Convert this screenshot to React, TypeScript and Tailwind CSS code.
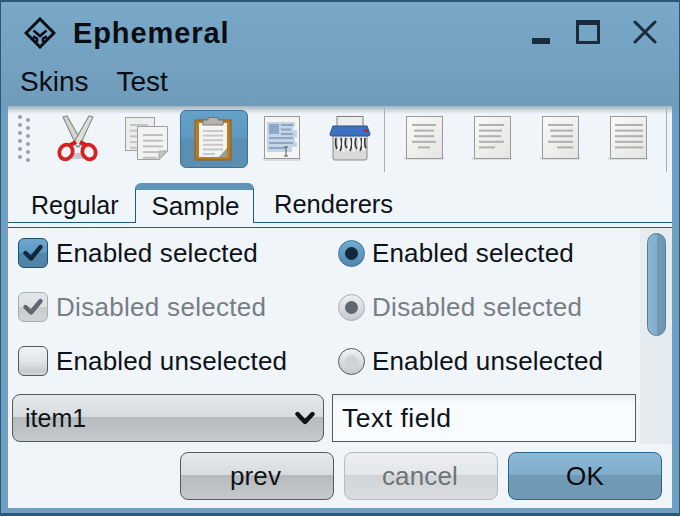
import React from 'react';

const FONT = 'font-["Liberation_Sans",sans-serif]';

function Logo() {
  return (
    <svg width="32" height="32" viewBox="0 0 32 32" fill="none" stroke="#0b0f14" strokeWidth="3">
      <path d="M16 2 L30 16 L16 30 L2 16 Z" />
      <path d="M9.5 13.5 L16 19 L22.5 13.5 M9 19.5 L13 21.5 L13 25 M23 19.5 L19 21.5 L19 25" strokeWidth="2.6" />
    </svg>
  );
}

function Scissors() {
  return (
    <svg width="44" height="48" viewBox="0 0 44 48">
      <ellipse cx="22" cy="41" rx="14" ry="3" fill="#c4c8cc" />
      <path d="M7 2 L11 1 L27 29 L21 32 Z" fill="#d4d4d0" stroke="#8c8c88" strokeWidth="1.2" />
      <path d="M37 2 L33 1 L17 29 L23 32 Z" fill="#dededa" stroke="#8c8c88" strokeWidth="1.2" />
      <path d="M20 27 L14 30 M24 27 L30 30" stroke="#cc1c1c" strokeWidth="4" />
      <ellipse cx="10" cy="37" rx="6.5" ry="7.5" transform="rotate(25 10 37)" fill="#f0f4f8" stroke="#d62222" strokeWidth="3.8" />
      <ellipse cx="33" cy="37" rx="6.5" ry="7.5" transform="rotate(-25 33 37)" fill="#f0f4f8" stroke="#d62222" strokeWidth="3.8" />
    </svg>
  );
}

function Lines({ x, y, widths, gap = 5.7, align = 'left', w = 26, color = '#b0b0b0' }: { x: number; y: number; widths: number[]; gap?: number; align?: string; w?: number; color?: string }) {
  return (
    <>
      {widths.map((lw, i) => {
        const left = align === 'left' ? x : align === 'right' ? x + w - lw : x + (w - lw) / 2;
        return <rect key={i} x={left} y={y + i * gap} width={lw} height="2" fill={color} />;
      })}
    </>
  );
}

function Copy() {
  return (
    <svg width="44" height="46" viewBox="0 0 44 46">
      <rect x="1.5" y="1.5" width="29" height="33" fill="#eceeee" stroke="#a0a0a0" />
      <Lines x={6} y={8} widths={[18, 18, 18, 18, 14]} color="#c4c4c4" />
      <path d="M13.5 10.5 H43.5 V35 L35 43.5 H13.5 Z" fill="#f2f3f3" stroke="#a0a0a0" />
      <path d="M35 43.5 L35 35 L43.5 35 Z" fill="#c6c6c6" stroke="#a0a0a0" />
      <Lines x={19} y={18} widths={[20, 20, 20, 20, 14]} color="#c0c0c0" />
    </svg>
  );
}

function Clipboard() {
  return (
    <svg width="40" height="46" viewBox="0 0 40 46">
      <rect x="1" y="4" width="36" height="40" fill="#b87d1f" stroke="#8c5f14" />
      <path d="M5 7 H33 V41 H5 Z" fill="#f2f3f2" />
      <path d="M25 41 L33 32 V41 Z" fill="#9a9a98" />
      <Lines x={9} y={14} widths={[20, 20, 20, 20, 20, 12]} gap={4.6} color="#c8c8c8" />
      <path d="M9 9 V4 H14 V1.5 H24 V4 H29 V9 Z" fill="#b4b4ac" stroke="#77776f" />
    </svg>
  );
}

function NoteDoc() {
  return (
    <svg width="40" height="46" viewBox="0 0 40 46">
      <rect x="1" y="42" width="38" height="3" fill="#d8dce0" />
      <rect x="2.5" y="0.5" width="35" height="42" fill="#f4f4f2" stroke="#9a9a9a" />
      <path d="M5 6 H33 V11 H31 V14 H35 V21 H33 V26 H35 V31 H30 V36 H5 Z" fill="#c4d4e8" />
      <rect x="7" y="8" width="10" height="10" fill="#8ea8c4" />
      <Lines x={19} y={8} widths={[12, 10, 12]} gap={4.5} color="#8ea8c4" />
      <Lines x={7} y={21} widths={[24, 24, 16]} gap={5} color="#8ea8c4" />
      <path d="M22 31 H26 M24 31 V40 M22 40 H26" stroke="#555" strokeWidth="1" fill="none" />
    </svg>
  );
}

function Shredder() {
  return (
    <svg width="44" height="48" viewBox="0 0 44 48">
      <path d="M5 18 H39 V43 Q39 45 37 45 H7 Q5 45 5 43 Z" fill="#d8dada" stroke="#8a8a8a" />
      <rect x="9" y="1.5" width="26" height="11" fill="#ececea" stroke="#808080" />
      <path d="M5 11 H39 L42 19 Q42 21 40 21 H4 Q2 21 2 19 Z" fill="#3f70c0" stroke="#29518f" />
      <rect x="36" y="14" width="4" height="3" fill="#d02020" />
      <path d="M8 23 Q7 30 9 34 M13 23 Q15 30 12 36 M18 23 Q16 30 19 33 M23 23 Q25 30 22 36 M28 23 Q26 30 29 34 M33 23 Q35 30 32 36 M37 23 Q36 30 38 33" stroke="#333" strokeWidth="1.6" fill="none" />
      <path d="M10.5 23 Q12 30 10 36 M15.5 23 Q14 30 16 37 M20.5 23 Q22 30 20 36 M25.5 23 Q24 30 26 37 M30.5 23 Q32 30 30 36 M35 23 Q34 30 36 36" stroke="#f6f6f6" strokeWidth="1.8" fill="none" />
    </svg>
  );
}

function AlignDoc({ align, widths }: { align: string; widths: number[] }) {
  return (
    <svg width="40" height="46" viewBox="0 0 40 46">
      <rect x="0" y="41" width="40" height="3" fill="#dde1e5" />
      <defs>
        <linearGradient id="docfill" x1="0" y1="0" x2="1" y2="1">
          <stop offset="0" stopColor="#fafafa" />
          <stop offset="1" stopColor="#e4e4e2" />
        </linearGradient>
      </defs>
      <rect x="2.5" y="0.5" width="36" height="42" fill="url(#docfill)" stroke="#9a9a9a" />
      <Lines x={7} y={8} widths={widths} align={align} gap={5.6} />
    </svg>
  );
}

function ToolButton({ selected, children }: { selected?: boolean; children: React.ReactNode }) {
  return (
    <div
      className={
        'w-[68px] h-[58px] flex items-center justify-center rounded-[6px] border ' +
        (selected
          ? 'border-[#3d7095] bg-[linear-gradient(#64a2ca_0%,#5c98c0_50%,#5a8eb3_50%,#5a8eb3_100%)]'
          : 'border-transparent')
      }
    >
      {children}
    </div>
  );
}

function Check({ color }: { color: string }) {
  return (
    <svg width="22" height="20" viewBox="0 0 22 20" fill="none" stroke={color} strokeWidth="4.4" strokeLinecap="round" strokeLinejoin="round">
      <path d="M3.5 10 L9 15.5 L18.5 4" />
    </svg>
  );
}

function CheckBox({ kind }: { kind: 'on' | 'disabled' | 'off' }) {
  const cls =
    kind === 'on'
      ? 'border-[#1f4f73] bg-[linear-gradient(#6ca8d0_0%,#5c98c0_50%,#5287ac_50%,#4f83a8_100%)]'
      : kind === 'disabled'
        ? 'border-[#a8adb2] bg-[linear-gradient(#e4e7ea_0%,#dde0e3_50%,#c8ccd0_50%,#d0d4d7_100%)]'
        : 'border-[#55595d] bg-[linear-gradient(#f0f2f4_0%,#e2e5e8_50%,#c8ccd0_85%,#d0d4d7_100%)]';
  return (
    <div className={'w-[30px] h-[30px] shrink-0 rounded-[6px] border flex items-center justify-center ' + cls}>
      {kind === 'on' && <Check color="#12283c" />}
      {kind === 'disabled' && <Check color="#5e6670" />}
    </div>
  );
}

function Radio({ kind }: { kind: 'on' | 'disabled' | 'off' }) {
  const cls =
    kind === 'on'
      ? 'border-[#3d7095] bg-[linear-gradient(#72acd2,#4f86ac)]'
      : kind === 'disabled'
        ? 'border-[#a8adb2] bg-[linear-gradient(#eef0f2,#c4c9ce)]'
        : 'border-[#55595d] bg-[linear-gradient(#f0f2f4,#c4c8cc)]';
  return (
    <div className={'w-[27px] h-[27px] shrink-0 rounded-full border flex items-center justify-center ' + cls}>
      {kind === 'on' && <div className="w-[13px] h-[13px] rounded-full bg-[#12283c]" />}
      {kind === 'disabled' && <div className="w-[13px] h-[13px] rounded-full bg-[#5e6670]" />}
      {kind === 'off' && <div className="w-[13px] h-[13px] rounded-full bg-[#d0d3d6]" />}
    </div>
  );
}

function OptionRow({ kind, text }: { kind: 'on' | 'disabled' | 'off'; text: string }) {
  const color = kind === 'disabled' ? 'text-[#787e84] tracking-[0.3px]' : 'text-[#0d1318]';
  return (
    <div className="h-[54px] flex items-center">
      <div className="w-[330px] flex items-center gap-[8px] pl-[10px]">
        <CheckBox kind={kind} />
        <span className={color}>{text}</span>
      </div>
      <div className="flex items-center gap-[7px]">
        <Radio kind={kind} />
        <span className={color}>{text}</span>
      </div>
    </div>
  );
}

function DialogButton({ kind, children }: { kind: 'normal' | 'disabled' | 'ok'; children: string }) {
  const cls =
    kind === 'ok'
      ? 'border-[#2f6288] text-[#06090c] bg-[linear-gradient(#8ab8d6_0%,#7fadcb_48%,#6f99b6_48%,#7199b6_100%)]'
      : kind === 'disabled'
        ? 'border-[#b8bcc0] text-[#6e7478] pr-[2px] bg-[linear-gradient(#eceef0_0%,#e4e7e9_48%,#d2d5d8_48%,#dadddf_100%)]'
        : 'border-[#55595d] text-[#0d1318] pr-[3px] bg-[linear-gradient(#e6e9ec_0%,#d8dcdf_48%,#b6babd_48%,#c6cacd_100%)]';
  return <div className={'w-[154px] h-[48px] rounded-[8px] border flex items-center justify-center pb-[1px] ' + cls}>{children}</div>;
}

function GripColumn({ offset }: { offset?: boolean }) {
  return (
    <div className={'flex flex-col gap-[4px] ' + (offset ? 'mt-[3px]' : '')}>
      {Array.from({ length: 6 }).map((_, i) => (
        <div key={i} className="w-[4px] h-[4px] rounded-full bg-[#9a9ea4]" />
      ))}
    </div>
  );
}

export default function App() {
  return (
    <div className={'w-[680px] h-[516px] flex flex-col overflow-hidden bg-[#6f9fc0] border-t-2 border-x border-b-[3px] border-[#2c5878] text-[26px] tracking-[0.15px] leading-none ' + FONT}>
      {/* Title */}
      <div className="h-[104px] shrink-0 flex flex-col bg-[linear-gradient(#79a8c8,#6f9cbb)] text-[#0a0e12]">
        <div className="h-[58px] flex items-center pl-[23px] pr-[22px] pt-[4px]">
          <Logo />
          <span className="ml-[17px] text-[29px] tracking-[0.9px] font-bold">Ephemeral</span>
          <div className="ml-auto flex items-start h-[24px] -mt-[2px]">
            <div className="w-[18px] h-[6px] bg-[#1a2c3c] mt-[18px]" />
            <div className="ml-[26px] w-[24px] h-[24px] border-[3px] border-t-[5px] border-[#1a2c3c]" />
            <svg className="ml-[33px]" width="24" height="24" viewBox="0 0 24 24" stroke="#1a2c3c" strokeWidth="3" strokeLinecap="round">
              <path d="M2 2 L22 22 M22 2 L2 22" />
            </svg>
          </div>
        </div>
        <div className="flex items-center pl-[19px] gap-[28px] mt-[8px] text-[28px] tracking-normal">
          <span>Skins</span>
          <span>Test</span>
        </div>
      </div>

      {/* Content */}
      <div className="mx-[7px] flex-1 min-h-0 flex flex-col bg-[#f0f5fa]">
        <div className="h-[8px] -mb-[8px] bg-[linear-gradient(#a4b4c0,#f0f5fa)]" />
        <div className="h-[66px] shrink-0 flex items-start pt-[4px] pl-[10px]">
          <div className="w-[14px] mt-[5px] mr-[2px] flex gap-[4px]">
            <GripColumn />
            <GripColumn offset />
          </div>
          <div className="ml-[10px] flex">
            <ToolButton><Scissors /></ToolButton>
            <ToolButton><Copy /></ToolButton>
            <ToolButton selected><Clipboard /></ToolButton>
            <ToolButton><NoteDoc /></ToolButton>
            <ToolButton><Shredder /></ToolButton>
          </div>
          <div className="w-px h-[64px] bg-[#a8aeb4] -mt-[2px] mr-[5px]" />
          <div className="flex">
            <ToolButton><AlignDoc align="center" widths={[24, 20, 20, 24, 12]} /></ToolButton>
            <ToolButton><AlignDoc align="left" widths={[25, 23, 22, 25, 16]} /></ToolButton>
            <ToolButton><AlignDoc align="right" widths={[25, 23, 22, 25, 16]} /></ToolButton>
            <ToolButton><AlignDoc align="left" widths={[28, 28, 28, 28, 28]} /></ToolButton>
          </div>
          <div className="w-px h-[64px] bg-[#a8aeb4] -mt-[2px] ml-[4px]" />
        </div>

        {/* Tabs */}
        <div className="h-[45px] shrink-0 flex items-end text-[#0d1318] mt-[6px] text-[25.5px] tracking-normal">
          <div className="w-[127px] h-[40px] flex items-center pl-[23px] pt-[5px] border-b border-[#1f5a80] text-[25px]">Regular</div>
          <div className="w-[119px] h-[40px] flex items-center justify-center pb-[2px] pl-[2px] rounded-t-[6px] border-x border-[#1f5a80] bg-[#f0f5fa] border-t-[7px] border-t-[#5f93b8] text-[26px]">Sample</div>
          <div className="flex-1 h-[40px] flex items-center pl-[20px] pt-[5px] border-b border-[#1f5a80]">Renderers</div>
        </div>
        <div className="h-[5px] shrink-0 border-b border-[#1f5a80]" />

        <div className="flex-1 min-h-0 flex flex-col">
          <div className="h-[216px] shrink-0 flex">
            <div className="flex-1 -mt-[2px] flex flex-col">
              <OptionRow kind="on" text="Enabled selected" />
              <OptionRow kind="disabled" text="Disabled selected" />
              <OptionRow kind="off" text="Enabled unselected" />
              <div className="flex gap-[8px] pl-[4px] mt-[6px]">
                <div className="w-[312px] h-[48px] rounded-[8px] border border-[#55595d] flex items-center justify-between pl-[12px] pr-[8px] text-[#0d1318] text-[25px] tracking-normal bg-[linear-gradient(#e6e9ec_0%,#d8dcdf_48%,#b6babd_48%,#c6cacd_100%)]">
                  <span>item1</span>
                  <svg width="20" height="14" viewBox="0 0 20 14" fill="none" stroke="#0d1318" strokeWidth="4.4" strokeLinecap="round" strokeLinejoin="round">
                    <path d="M2.5 3 L10 11 L17.5 3" />
                  </svg>
                </div>
                <div className="w-[304px] h-[48px] border border-[#55595d] flex items-center pl-[9px] text-[#0d1318] text-[26.5px] tracking-[0.5px] bg-[linear-gradient(#e8ecf0,#f8fbff_20%)]">
                  Text field
                </div>
              </div>
            </div>
            <div className="w-[32px] shrink-0 bg-[#e6ebf0] pt-[5px] pl-[7px]">
              <div className="w-[19px] h-[103px] rounded-full border border-[#5a7a92] bg-[linear-gradient(90deg,#8ab8d6,#7fadcb_50%,#6f99b6_50%,#7199b6)]" />
            </div>
          </div>
          <div className="flex justify-end gap-[10px] pr-[10px] pt-[8px]">
            <DialogButton kind="normal">prev</DialogButton>
            <DialogButton kind="disabled">cancel</DialogButton>
            <DialogButton kind="ok">OK</DialogButton>
          </div>
        </div>
      </div>
      <div className="h-[5px] shrink-0" />
    </div>
  );
}
